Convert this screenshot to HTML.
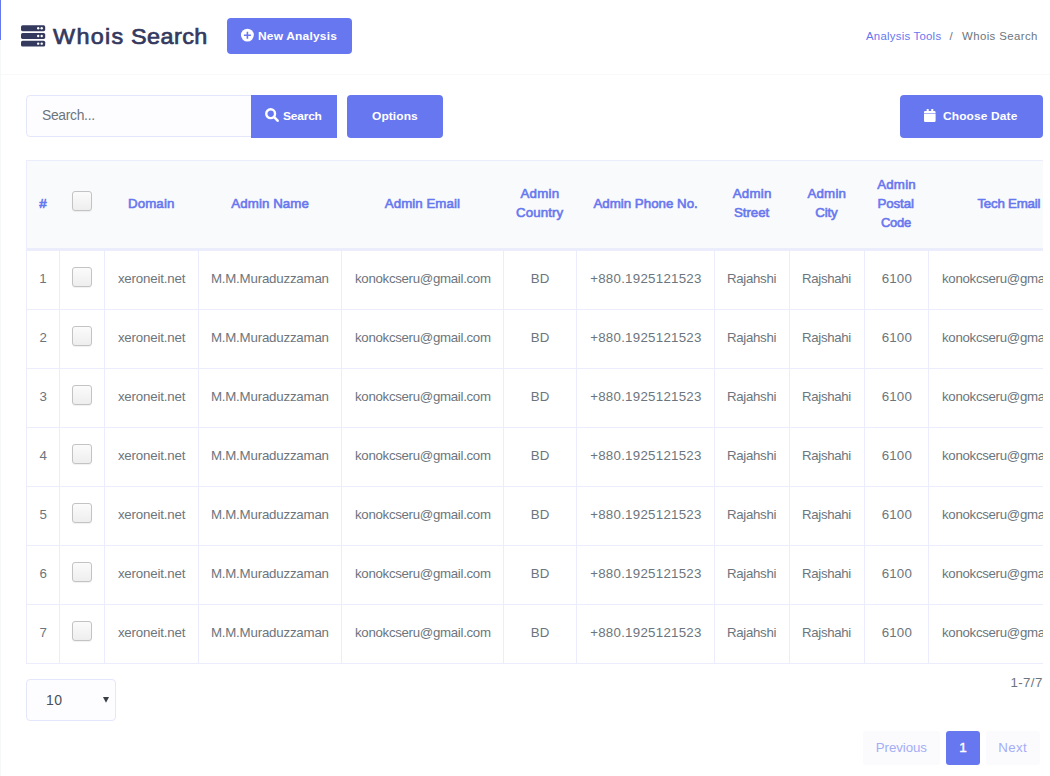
<!DOCTYPE html>
<html><head><meta charset="utf-8"><title>Whois Search</title>
<style>
*{box-sizing:border-box;margin:0;padding:0}
html,body{width:1050px;height:776px;overflow:hidden;background:#fff;font-family:"Liberation Sans",sans-serif}
#clip{position:absolute;left:0;top:0;width:1050px;height:776px;overflow:hidden}
.b{position:absolute}
.t{position:absolute;white-space:nowrap;line-height:20px;height:20px}
</style></head><body><div id="clip">
<div class="b" style="left:0px;top:0px;width:1px;height:40px;background:#6777ef;"></div>
<div class="b" style="left:0px;top:40px;width:1px;height:736px;background:#f6f7f7;"></div>
<div class="b" style="left:1px;top:74px;width:1049px;height:1px;background:#f9f9f9;"></div>
<div class="b" style="left:227px;top:18px;width:125px;height:36px;background:#6777ef;border-radius:4px;"></div>
<div class="b" style="left:26px;top:95px;width:226px;height:42px;background:#fdfdff;border:1px solid #e4e6fc;border-radius:4px 0 0 4px;"></div>
<div class="b" style="left:251px;top:95px;width:86px;height:43px;background:#6777ef;"></div>
<div class="b" style="left:347px;top:95px;width:96px;height:43px;background:#6777ef;border-radius:4px;"></div>
<div class="b" style="left:900px;top:95px;width:143px;height:43px;background:#6777ef;border-radius:4px;"></div>
<div class="b" style="left:26px;top:160px;width:1017px;height:88px;background:#f9fafb;"></div>
<div class="b" style="left:26px;top:160px;width:1017px;height:1px;background:#ecedfc;"></div>
<div class="b" style="left:26px;top:160px;width:1px;height:91px;background:#ecedfc;"></div>
<div class="b" style="left:26px;top:248px;width:1017px;height:3px;background:#ecedfc;"></div>
<div class="b" style="left:26px;top:309px;width:1017px;height:1px;background:#ecedfc;"></div>
<div class="b" style="left:26px;top:368px;width:1017px;height:1px;background:#ecedfc;"></div>
<div class="b" style="left:26px;top:427px;width:1017px;height:1px;background:#ecedfc;"></div>
<div class="b" style="left:26px;top:486px;width:1017px;height:1px;background:#ecedfc;"></div>
<div class="b" style="left:26px;top:545px;width:1017px;height:1px;background:#ecedfc;"></div>
<div class="b" style="left:26px;top:604px;width:1017px;height:1px;background:#ecedfc;"></div>
<div class="b" style="left:26px;top:663px;width:1017px;height:1px;background:#ecedfc;"></div>
<div class="b" style="left:26px;top:251px;width:1px;height:413px;background:#ecedfc;"></div>
<div class="b" style="left:59px;top:251px;width:1px;height:413px;background:#ecedfc;"></div>
<div class="b" style="left:104px;top:251px;width:1px;height:413px;background:#ecedfc;"></div>
<div class="b" style="left:198px;top:251px;width:1px;height:413px;background:#ecedfc;"></div>
<div class="b" style="left:341px;top:251px;width:1px;height:413px;background:#ecedfc;"></div>
<div class="b" style="left:503px;top:251px;width:1px;height:413px;background:#ecedfc;"></div>
<div class="b" style="left:576px;top:251px;width:1px;height:413px;background:#ecedfc;"></div>
<div class="b" style="left:714px;top:251px;width:1px;height:413px;background:#ecedfc;"></div>
<div class="b" style="left:789px;top:251px;width:1px;height:413px;background:#ecedfc;"></div>
<div class="b" style="left:864px;top:251px;width:1px;height:413px;background:#ecedfc;"></div>
<div class="b" style="left:928px;top:251px;width:1px;height:413px;background:#ecedfc;"></div>
<div class="b" style="left:72px;top:191px;width:20px;height:20px;background:;border:1px solid #c3c3c3;border-radius:3px;background:linear-gradient(#fbfbfb,#eeeeee);box-shadow:0 1px 1px rgba(0,0,0,0.06);"></div>
<div class="b" style="left:72px;top:267px;width:20px;height:20px;background:;border:1px solid #c3c3c3;border-radius:3px;background:linear-gradient(#fbfbfb,#eeeeee);box-shadow:0 1px 1px rgba(0,0,0,0.06);"></div>
<div class="b" style="left:72px;top:326px;width:20px;height:20px;background:;border:1px solid #c3c3c3;border-radius:3px;background:linear-gradient(#fbfbfb,#eeeeee);box-shadow:0 1px 1px rgba(0,0,0,0.06);"></div>
<div class="b" style="left:72px;top:385px;width:20px;height:20px;background:;border:1px solid #c3c3c3;border-radius:3px;background:linear-gradient(#fbfbfb,#eeeeee);box-shadow:0 1px 1px rgba(0,0,0,0.06);"></div>
<div class="b" style="left:72px;top:444px;width:20px;height:20px;background:;border:1px solid #c3c3c3;border-radius:3px;background:linear-gradient(#fbfbfb,#eeeeee);box-shadow:0 1px 1px rgba(0,0,0,0.06);"></div>
<div class="b" style="left:72px;top:503px;width:20px;height:20px;background:;border:1px solid #c3c3c3;border-radius:3px;background:linear-gradient(#fbfbfb,#eeeeee);box-shadow:0 1px 1px rgba(0,0,0,0.06);"></div>
<div class="b" style="left:72px;top:562px;width:20px;height:20px;background:;border:1px solid #c3c3c3;border-radius:3px;background:linear-gradient(#fbfbfb,#eeeeee);box-shadow:0 1px 1px rgba(0,0,0,0.06);"></div>
<div class="b" style="left:72px;top:621px;width:20px;height:20px;background:;border:1px solid #c3c3c3;border-radius:3px;background:linear-gradient(#fbfbfb,#eeeeee);box-shadow:0 1px 1px rgba(0,0,0,0.06);"></div>
<div class="b" style="left:26px;top:679px;width:90px;height:42px;background:#fdfdff;border:1px solid #e4e6fc;border-radius:4px;"></div>
<div class="b" style="left:863px;top:731px;width:77px;height:34px;background:#fbfbfe;border-radius:3px;"></div>
<div class="b" style="left:946px;top:731px;width:34px;height:34px;background:#6777ef;border-radius:3px;"></div>
<div class="b" style="left:986px;top:731px;width:54px;height:34px;background:#fbfbfe;border-radius:3px;"></div>
<div class="b" style="left:1043px;top:155px;width:7px;height:515px;background:#fff;z-index:5"></div>
<svg class="b" style="left:21px;top:25px" width="25" height="22" viewBox="0 0 25 22"><g fill="#34395e"><rect x="0" y="0.3" width="24.2" height="5.9" rx="1.6"/><rect x="0" y="8" width="24.2" height="5.9" rx="1.6"/><rect x="0" y="15.7" width="24.2" height="5.9" rx="1.6"/></g><g fill="#fff"><circle cx="17.2" cy="3.25" r="1.2"/><circle cx="20.7" cy="3.25" r="1.2"/><circle cx="17.2" cy="10.95" r="1.2"/><circle cx="20.7" cy="10.95" r="1.2"/><circle cx="17.2" cy="18.65" r="1.2"/><circle cx="20.7" cy="18.65" r="1.2"/></g></svg>
<svg class="b" style="left:240px;top:28px" width="15" height="15" viewBox="0 0 15 15"><circle cx="7.4" cy="7.1" r="6.45" fill="#fff"/><path d="M7.4 3.7v7M3.9 7.2h7" stroke="#6777ef" stroke-width="1.6"/></svg>
<svg class="b" style="left:264px;top:108px" width="16" height="16" viewBox="0 0 16 16"><circle cx="6.65" cy="5.7" r="4.4" fill="none" stroke="#fff" stroke-width="2.4"/><path d="M9.9 8.9l3.7 3.8" stroke="#fff" stroke-width="2.6" stroke-linecap="round"/></svg>
<svg class="b" style="left:923px;top:108px" width="14" height="15" viewBox="0 0 14 15"><g fill="#fff"><path d="M1 6.05h11.6v6.6a1.3 1.3 0 0 1 -1.3 1.3h-9a1.3 1.3 0 0 1 -1.3 -1.3z"/><path d="M1 5.2V4.2a1.2 1.2 0 0 1 1.2-1.2h9.2a1.2 1.2 0 0 1 1.2 1.2v1z"/><rect x="3.7" y="1" width="2" height="3" rx=".5"/><rect x="8.2" y="1" width="2.1" height="3" rx=".5"/><rect x="1" y="5.2" width="11.6" height=".85" opacity=".3"/></g></svg>
<svg class="b" style="left:103px;top:697px" width="6" height="6" viewBox="0 0 6 6"><path d="M0 0h6L3 5.7z" fill="#3a3f45"/></svg>

<span class="t" style="left:52.87px;top:27.20px;font-size:22.3px;color:#34395e;letter-spacing:1.232px;transform:scaleX(1.05);transform-origin:0 0;-webkit-text-stroke:0.7px #34395e;">Whois</span>
<span class="t" style="left:131.02px;top:27.20px;font-size:22.3px;color:#34395e;letter-spacing:0.420px;transform:scaleX(1.05);transform-origin:0 0;-webkit-text-stroke:0.7px #34395e;">Search</span>
<span class="t" style="left:258.30px;top:26.00px;font-size:11.3px;font-weight:bold;color:#fff;letter-spacing:0.180px;transform:scaleX(1.06);transform-origin:0 0;">New Analysis</span>
<span class="t" style="left:866.00px;top:26.00px;font-size:11.4px;color:#6777ef;letter-spacing:0.240px;">Analysis Tools</span>
<span class="t" style="left:949.60px;top:26.00px;font-size:11.4px;color:#6c757d;letter-spacing:0.000px;">/</span>
<span class="t" style="left:962.00px;top:26.00px;font-size:11.4px;color:#6c757d;letter-spacing:0.403px;">Whois Search</span>
<span class="t" style="left:42.10px;top:105.30px;font-size:14px;color:#6c757d;letter-spacing:-0.300px;transform:scaleX(0.9898);transform-origin:0 0;">Search...</span>
<span class="t" style="left:283.00px;top:106.00px;font-size:11.3px;font-weight:bold;color:#fff;letter-spacing:-0.197px;transform:scaleX(1.06);transform-origin:0 0;">Search</span>
<span class="t" style="left:372.00px;top:106.00px;font-size:11.3px;font-weight:bold;color:#fff;letter-spacing:0.073px;transform:scaleX(1.06);transform-origin:0 0;">Options</span>
<span class="t" style="left:943.00px;top:106.00px;font-size:11.3px;font-weight:bold;color:#fff;letter-spacing:0.104px;transform:scaleX(1.06);transform-origin:0 0;">Choose Date</span>
<span class="t" style="left:39.30px;top:193.60px;font-size:13.3px;color:#6777ef;letter-spacing:0.000px;-webkit-text-stroke:0.6px #6777ef;">#</span>
<span class="t" style="left:127.90px;top:193.60px;font-size:13.3px;color:#6777ef;letter-spacing:0.135px;-webkit-text-stroke:0.6px #6777ef;">Domain</span>
<span class="t" style="left:231.30px;top:193.60px;font-size:13.3px;color:#6777ef;letter-spacing:0.082px;-webkit-text-stroke:0.6px #6777ef;">Admin Name</span>
<span class="t" style="left:384.80px;top:193.60px;font-size:13.3px;color:#6777ef;letter-spacing:0.042px;-webkit-text-stroke:0.6px #6777ef;">Admin Email</span>
<span class="t" style="left:520.50px;top:184.10px;font-size:13.3px;color:#6777ef;letter-spacing:0.226px;-webkit-text-stroke:0.6px #6777ef;">Admin</span>
<span class="t" style="left:516.00px;top:203.10px;font-size:13.3px;color:#6777ef;letter-spacing:0.098px;-webkit-text-stroke:0.6px #6777ef;">Country</span>
<span class="t" style="left:593.40px;top:193.60px;font-size:13.3px;color:#6777ef;letter-spacing:0.012px;-webkit-text-stroke:0.6px #6777ef;">Admin Phone No.</span>
<span class="t" style="left:732.70px;top:184.10px;font-size:13.3px;color:#6777ef;letter-spacing:0.226px;-webkit-text-stroke:0.6px #6777ef;">Admin</span>
<span class="t" style="left:733.90px;top:203.10px;font-size:13.3px;color:#6777ef;letter-spacing:-0.036px;-webkit-text-stroke:0.6px #6777ef;">Street</span>
<span class="t" style="left:807.40px;top:184.10px;font-size:13.3px;color:#6777ef;letter-spacing:0.226px;-webkit-text-stroke:0.6px #6777ef;">Admin</span>
<span class="t" style="left:815.30px;top:203.10px;font-size:13.3px;color:#6777ef;letter-spacing:-0.184px;-webkit-text-stroke:0.6px #6777ef;">City</span>
<span class="t" style="left:877.20px;top:174.60px;font-size:13.3px;color:#6777ef;letter-spacing:0.201px;-webkit-text-stroke:0.6px #6777ef;">Admin</span>
<span class="t" style="left:877.40px;top:193.60px;font-size:13.3px;color:#6777ef;letter-spacing:-0.080px;-webkit-text-stroke:0.6px #6777ef;">Postal</span>
<span class="t" style="left:881.29px;top:212.60px;font-size:13.3px;color:#6777ef;letter-spacing:-0.300px;transform:scaleX(0.9777);transform-origin:0 0;-webkit-text-stroke:0.6px #6777ef;">Code</span>
<span class="t" style="left:977.40px;top:193.60px;font-size:13.3px;color:#6777ef;letter-spacing:-0.220px;-webkit-text-stroke:0.6px #6777ef;">Tech Email</span>
<span class="t" style="left:39.20px;top:268.60px;font-size:13.3px;color:#6c757d;letter-spacing:0.000px;">1</span>
<span class="t" style="left:117.90px;top:268.60px;font-size:13.3px;color:#6c757d;letter-spacing:-0.181px;">xeroneit.net</span>
<span class="t" style="left:210.90px;top:268.60px;font-size:13.3px;color:#6c757d;letter-spacing:-0.206px;">M.M.Muraduzzaman</span>
<span class="t" style="left:354.80px;top:268.60px;font-size:13.3px;color:#6c757d;letter-spacing:-0.300px;transform:scaleX(0.997);transform-origin:0 0;">konokcseru@gmail.com</span>
<span class="t" style="left:530.70px;top:268.60px;font-size:13.3px;color:#6c757d;letter-spacing:0.231px;">BD</span>
<span class="t" style="left:590.20px;top:268.60px;font-size:13.3px;color:#6c757d;letter-spacing:0.257px;">+880.1925121523</span>
<span class="t" style="left:726.90px;top:268.60px;font-size:13.3px;color:#6c757d;letter-spacing:-0.300px;transform:scaleX(0.9962);transform-origin:0 0;">Rajahshi</span>
<span class="t" style="left:801.91px;top:268.60px;font-size:13.3px;color:#6c757d;letter-spacing:-0.300px;transform:scaleX(0.9921);transform-origin:0 0;">Rajshahi</span>
<span class="t" style="left:881.70px;top:268.60px;font-size:13.3px;color:#6c757d;letter-spacing:0.172px;">6100</span>
<span class="t" style="left:941.70px;top:268.60px;font-size:13.3px;color:#6c757d;letter-spacing:-0.300px;transform:scaleX(0.997);transform-origin:0 0;">konokcseru@gmail.com</span>
<span class="t" style="left:39.50px;top:327.60px;font-size:13.3px;color:#6c757d;letter-spacing:0.000px;">2</span>
<span class="t" style="left:117.90px;top:327.60px;font-size:13.3px;color:#6c757d;letter-spacing:-0.181px;">xeroneit.net</span>
<span class="t" style="left:210.90px;top:327.60px;font-size:13.3px;color:#6c757d;letter-spacing:-0.206px;">M.M.Muraduzzaman</span>
<span class="t" style="left:354.80px;top:327.60px;font-size:13.3px;color:#6c757d;letter-spacing:-0.300px;transform:scaleX(0.997);transform-origin:0 0;">konokcseru@gmail.com</span>
<span class="t" style="left:530.70px;top:327.60px;font-size:13.3px;color:#6c757d;letter-spacing:0.231px;">BD</span>
<span class="t" style="left:590.20px;top:327.60px;font-size:13.3px;color:#6c757d;letter-spacing:0.257px;">+880.1925121523</span>
<span class="t" style="left:726.90px;top:327.60px;font-size:13.3px;color:#6c757d;letter-spacing:-0.300px;transform:scaleX(0.9962);transform-origin:0 0;">Rajahshi</span>
<span class="t" style="left:801.91px;top:327.60px;font-size:13.3px;color:#6c757d;letter-spacing:-0.300px;transform:scaleX(0.9921);transform-origin:0 0;">Rajshahi</span>
<span class="t" style="left:881.70px;top:327.60px;font-size:13.3px;color:#6c757d;letter-spacing:0.172px;">6100</span>
<span class="t" style="left:941.70px;top:327.60px;font-size:13.3px;color:#6c757d;letter-spacing:-0.300px;transform:scaleX(0.997);transform-origin:0 0;">konokcseru@gmail.com</span>
<span class="t" style="left:39.50px;top:386.60px;font-size:13.3px;color:#6c757d;letter-spacing:0.000px;">3</span>
<span class="t" style="left:117.90px;top:386.60px;font-size:13.3px;color:#6c757d;letter-spacing:-0.181px;">xeroneit.net</span>
<span class="t" style="left:210.90px;top:386.60px;font-size:13.3px;color:#6c757d;letter-spacing:-0.206px;">M.M.Muraduzzaman</span>
<span class="t" style="left:354.80px;top:386.60px;font-size:13.3px;color:#6c757d;letter-spacing:-0.300px;transform:scaleX(0.997);transform-origin:0 0;">konokcseru@gmail.com</span>
<span class="t" style="left:530.70px;top:386.60px;font-size:13.3px;color:#6c757d;letter-spacing:0.231px;">BD</span>
<span class="t" style="left:590.20px;top:386.60px;font-size:13.3px;color:#6c757d;letter-spacing:0.257px;">+880.1925121523</span>
<span class="t" style="left:726.90px;top:386.60px;font-size:13.3px;color:#6c757d;letter-spacing:-0.300px;transform:scaleX(0.9962);transform-origin:0 0;">Rajahshi</span>
<span class="t" style="left:801.91px;top:386.60px;font-size:13.3px;color:#6c757d;letter-spacing:-0.300px;transform:scaleX(0.9921);transform-origin:0 0;">Rajshahi</span>
<span class="t" style="left:881.70px;top:386.60px;font-size:13.3px;color:#6c757d;letter-spacing:0.172px;">6100</span>
<span class="t" style="left:941.70px;top:386.60px;font-size:13.3px;color:#6c757d;letter-spacing:-0.300px;transform:scaleX(0.997);transform-origin:0 0;">konokcseru@gmail.com</span>
<span class="t" style="left:39.50px;top:445.60px;font-size:13.3px;color:#6c757d;letter-spacing:0.000px;">4</span>
<span class="t" style="left:117.90px;top:445.60px;font-size:13.3px;color:#6c757d;letter-spacing:-0.181px;">xeroneit.net</span>
<span class="t" style="left:210.90px;top:445.60px;font-size:13.3px;color:#6c757d;letter-spacing:-0.206px;">M.M.Muraduzzaman</span>
<span class="t" style="left:354.80px;top:445.60px;font-size:13.3px;color:#6c757d;letter-spacing:-0.300px;transform:scaleX(0.997);transform-origin:0 0;">konokcseru@gmail.com</span>
<span class="t" style="left:530.70px;top:445.60px;font-size:13.3px;color:#6c757d;letter-spacing:0.231px;">BD</span>
<span class="t" style="left:590.20px;top:445.60px;font-size:13.3px;color:#6c757d;letter-spacing:0.257px;">+880.1925121523</span>
<span class="t" style="left:726.90px;top:445.60px;font-size:13.3px;color:#6c757d;letter-spacing:-0.300px;transform:scaleX(0.9962);transform-origin:0 0;">Rajahshi</span>
<span class="t" style="left:801.91px;top:445.60px;font-size:13.3px;color:#6c757d;letter-spacing:-0.300px;transform:scaleX(0.9921);transform-origin:0 0;">Rajshahi</span>
<span class="t" style="left:881.70px;top:445.60px;font-size:13.3px;color:#6c757d;letter-spacing:0.172px;">6100</span>
<span class="t" style="left:941.70px;top:445.60px;font-size:13.3px;color:#6c757d;letter-spacing:-0.300px;transform:scaleX(0.997);transform-origin:0 0;">konokcseru@gmail.com</span>
<span class="t" style="left:39.50px;top:504.60px;font-size:13.3px;color:#6c757d;letter-spacing:0.000px;">5</span>
<span class="t" style="left:117.90px;top:504.60px;font-size:13.3px;color:#6c757d;letter-spacing:-0.181px;">xeroneit.net</span>
<span class="t" style="left:210.90px;top:504.60px;font-size:13.3px;color:#6c757d;letter-spacing:-0.206px;">M.M.Muraduzzaman</span>
<span class="t" style="left:354.80px;top:504.60px;font-size:13.3px;color:#6c757d;letter-spacing:-0.300px;transform:scaleX(0.997);transform-origin:0 0;">konokcseru@gmail.com</span>
<span class="t" style="left:530.70px;top:504.60px;font-size:13.3px;color:#6c757d;letter-spacing:0.231px;">BD</span>
<span class="t" style="left:590.20px;top:504.60px;font-size:13.3px;color:#6c757d;letter-spacing:0.257px;">+880.1925121523</span>
<span class="t" style="left:726.90px;top:504.60px;font-size:13.3px;color:#6c757d;letter-spacing:-0.300px;transform:scaleX(0.9962);transform-origin:0 0;">Rajahshi</span>
<span class="t" style="left:801.91px;top:504.60px;font-size:13.3px;color:#6c757d;letter-spacing:-0.300px;transform:scaleX(0.9921);transform-origin:0 0;">Rajshahi</span>
<span class="t" style="left:881.70px;top:504.60px;font-size:13.3px;color:#6c757d;letter-spacing:0.172px;">6100</span>
<span class="t" style="left:941.70px;top:504.60px;font-size:13.3px;color:#6c757d;letter-spacing:-0.300px;transform:scaleX(0.997);transform-origin:0 0;">konokcseru@gmail.com</span>
<span class="t" style="left:39.50px;top:563.60px;font-size:13.3px;color:#6c757d;letter-spacing:0.000px;">6</span>
<span class="t" style="left:117.90px;top:563.60px;font-size:13.3px;color:#6c757d;letter-spacing:-0.181px;">xeroneit.net</span>
<span class="t" style="left:210.90px;top:563.60px;font-size:13.3px;color:#6c757d;letter-spacing:-0.206px;">M.M.Muraduzzaman</span>
<span class="t" style="left:354.80px;top:563.60px;font-size:13.3px;color:#6c757d;letter-spacing:-0.300px;transform:scaleX(0.997);transform-origin:0 0;">konokcseru@gmail.com</span>
<span class="t" style="left:530.70px;top:563.60px;font-size:13.3px;color:#6c757d;letter-spacing:0.231px;">BD</span>
<span class="t" style="left:590.20px;top:563.60px;font-size:13.3px;color:#6c757d;letter-spacing:0.257px;">+880.1925121523</span>
<span class="t" style="left:726.90px;top:563.60px;font-size:13.3px;color:#6c757d;letter-spacing:-0.300px;transform:scaleX(0.9962);transform-origin:0 0;">Rajahshi</span>
<span class="t" style="left:801.91px;top:563.60px;font-size:13.3px;color:#6c757d;letter-spacing:-0.300px;transform:scaleX(0.9921);transform-origin:0 0;">Rajshahi</span>
<span class="t" style="left:881.70px;top:563.60px;font-size:13.3px;color:#6c757d;letter-spacing:0.172px;">6100</span>
<span class="t" style="left:941.70px;top:563.60px;font-size:13.3px;color:#6c757d;letter-spacing:-0.300px;transform:scaleX(0.997);transform-origin:0 0;">konokcseru@gmail.com</span>
<span class="t" style="left:39.50px;top:622.60px;font-size:13.3px;color:#6c757d;letter-spacing:0.000px;">7</span>
<span class="t" style="left:117.90px;top:622.60px;font-size:13.3px;color:#6c757d;letter-spacing:-0.181px;">xeroneit.net</span>
<span class="t" style="left:210.90px;top:622.60px;font-size:13.3px;color:#6c757d;letter-spacing:-0.206px;">M.M.Muraduzzaman</span>
<span class="t" style="left:354.80px;top:622.60px;font-size:13.3px;color:#6c757d;letter-spacing:-0.300px;transform:scaleX(0.997);transform-origin:0 0;">konokcseru@gmail.com</span>
<span class="t" style="left:530.70px;top:622.60px;font-size:13.3px;color:#6c757d;letter-spacing:0.231px;">BD</span>
<span class="t" style="left:590.20px;top:622.60px;font-size:13.3px;color:#6c757d;letter-spacing:0.257px;">+880.1925121523</span>
<span class="t" style="left:726.90px;top:622.60px;font-size:13.3px;color:#6c757d;letter-spacing:-0.300px;transform:scaleX(0.9962);transform-origin:0 0;">Rajahshi</span>
<span class="t" style="left:801.91px;top:622.60px;font-size:13.3px;color:#6c757d;letter-spacing:-0.300px;transform:scaleX(0.9921);transform-origin:0 0;">Rajshahi</span>
<span class="t" style="left:881.70px;top:622.60px;font-size:13.3px;color:#6c757d;letter-spacing:0.172px;">6100</span>
<span class="t" style="left:941.70px;top:622.60px;font-size:13.3px;color:#6c757d;letter-spacing:-0.300px;transform:scaleX(0.997);transform-origin:0 0;">konokcseru@gmail.com</span>
<span class="t" style="left:46.00px;top:690.00px;font-size:14px;color:#495057;letter-spacing:0.514px;">10</span>
<span class="t" style="left:1010.50px;top:673.40px;font-size:13.3px;color:#6c757d;letter-spacing:0.372px;">1-7/7</span>
<span class="t" style="left:875.80px;top:737.50px;font-size:13.3px;color:#a4adf5;letter-spacing:-0.084px;">Previous</span>
<span class="t" style="left:959.30px;top:737.50px;font-size:13.5px;color:#fff;letter-spacing:0.000px;-webkit-text-stroke:0.4px #fff;">1</span>
<span class="t" style="left:998.30px;top:737.50px;font-size:13.3px;color:#a4adf5;letter-spacing:0.351px;">Next</span>
</div></body></html>
